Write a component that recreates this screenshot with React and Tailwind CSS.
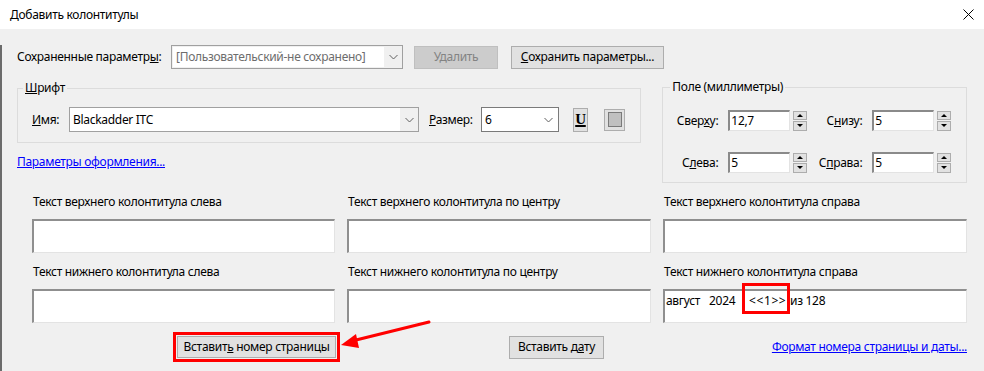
import React from 'react';

// small grey chevron used in the combo boxes
const Chevron = () => (
  <svg width="9" height="6" viewBox="0 0 9 6" className="shrink-0">
    <polyline points="0.5,1 4.5,5 8.5,1" fill="none" stroke="#606060" strokeWidth="1" />
  </svg>
);

const SpinInput = ({ value }) => (
  <div className="flex items-center">
    <div className="w-[62px] h-[21px] bg-white border-t-2 border-l-2 border-r border-b border-t-[#8a8a8a] border-l-[#8a8a8a] border-r-[#e3e3e3] border-b-[#e3e3e3] pl-[1px] flex items-center leading-[16px]">
      {value}
    </div>
    <div className="ml-[3px] w-[14px] h-[20px] flex flex-col gap-[1px]">
      <div className="flex-1 bg-[#e1e1e1] border border-[#adadad] flex items-center justify-center">
        <div className="w-0 h-0 border-l-[3px] border-r-[3px] border-b-[3px] border-l-transparent border-r-transparent border-b-black" />
      </div>
      <div className="flex-1 bg-[#e1e1e1] border border-[#adadad] flex items-center justify-center">
        <div className="w-0 h-0 border-l-[3px] border-r-[3px] border-t-[3px] border-l-transparent border-r-transparent border-t-black" />
      </div>
    </div>
  </div>
);

const TextBox = ({ children }) => (
  <div className="relative h-[34px] bg-white border-t-2 border-l-2 border-r border-b border-t-[#8f8f8f] border-l-[#8f8f8f] border-r-[#e3e3e3] border-b-[#e3e3e3] pl-[1px] pt-[2px] leading-[16px] whitespace-pre">
    {children}
  </div>
);

const App = () => {
  return (
    <div className="relative w-[984px] h-[371px] overflow-hidden bg-[#f0f0f0] text-[12px] leading-[16px] tracking-[-0.3px] text-black font-['Noto_Sans',sans-serif]">
      {/* Title bar */}
      <div className="h-[29px] bg-white flex items-center justify-between pl-[10px] pr-[10px]">
        <span>Добавить колонтитулы</span>
        <svg width="11" height="11" viewBox="0 0 11 11">
          <path d="M0.5 0.5 L10.5 10.5 M10.5 0.5 L0.5 10.5" stroke="#000" strokeWidth="1" />
        </svg>
      </div>

      <div className="h-[342px] border-l-2 border-[#6b6b6b] pl-[15px] pr-[17px]">
        {/* Saved settings row */}
        <div className="mt-[16px] h-[24px] flex items-center">
          <span className="w-[154px]">
            Сохраненные параметр<u>ы</u>:
          </span>
          <div className="w-[232px] h-[24px] border border-[#a0a0a0] bg-[#f0f0f0] flex items-center">
            <div className="w-[211px] h-[20px] ml-[1px] bg-white text-[#6d6d6d] pl-[3px] flex items-center">
              [Пользовательский-не сохранено]
            </div>
            <div className="flex-1 flex justify-center">
              <Chevron />
            </div>
          </div>
          <div className="ml-[11px] w-[84px] h-[23px] bg-[#cccccc] border border-[#bfbfbf] text-[#838383] flex items-center justify-center">
            Удалить
          </div>
          <div className="ml-[13px] w-[153px] h-[23px] bg-[#e1e1e1] border border-[#adadad] flex items-center justify-center">
            <span>
              <u>С</u>охранить параметры...
            </span>
          </div>
        </div>

        {/* Font + margins */}
        <div className="mt-[10px] flex items-start">
          <div className="w-[625px] mt-[1px]">
            <fieldset className="border border-[#dcdcdc] pl-[14px] pb-[10px]">
              <legend className="-ml-[9px] px-[2px] leading-[16px]">
                <u>Ш</u>рифт
              </legend>
              <div className="mt-[11px] h-[25px] flex items-center">
                <span className="w-[37px]">
                  <u>И</u>мя:
                </span>
                <div className="w-[350px] h-[25px] border border-[#a0a0a0] bg-[#f0f0f0] flex items-center">
                  <div className="w-[330px] h-[23px] bg-white pl-[3px] flex items-center">Blackadder ITC</div>
                  <div className="flex-1 flex justify-center">
                    <Chevron />
                  </div>
                </div>
                <span className="ml-[10px] w-[52px]">
                  <u>Р</u>азмер:
                </span>
                <div className="w-[78px] h-[25px] border border-[#7a7a7a] bg-white flex items-center justify-between pl-[3px] pr-[5px]">
                  <span>6</span>
                  <Chevron />
                </div>
                <div className="ml-[14px] w-[15px] h-[24px] bg-[#e1e1e1] border border-[#adadad] flex items-center justify-center">
                  <span className="font-['Liberation_Serif',serif] font-bold text-[15px] leading-[15px] underline decoration-[2px] underline-offset-[1px]">
                    U
                  </span>
                </div>
                <div className="ml-[16px] w-[21px] h-[22px] bg-[#e1e1e1] border border-[#adadad] flex items-center justify-center">
                  <div className="w-[14px] h-[15px] bg-[#c0c0c0] border border-[#7a7a7a]" />
                </div>
              </div>
            </fieldset>
            <a className="block mt-[11px] text-[#0000ff] underline">Параметры оформления...</a>
          </div>

          <fieldset className="ml-[21px] w-[305px] border border-[#dcdcdc] pl-[6px] pt-[15px] pb-[9px]">
            <legend className="ml-[1px] px-[2px] leading-[16px]">Поле (миллиметры)</legend>
            <div className="flex items-center h-[21px]">
              <span className="w-[49px] text-right">
                Свер<u>х</u>у:
              </span>
              <div className="ml-[10px]">
                <SpinInput value="12,7" />
              </div>
              <span className="w-[55px] text-right">
                С<u>н</u>изу:
              </span>
              <div className="ml-[10px]">
                <SpinInput value="5" />
              </div>
            </div>
            <div className="mt-[21px] flex items-center h-[21px]">
              <span className="w-[49px] text-right">
                С<u>л</u>ева:
              </span>
              <div className="ml-[10px]">
                <SpinInput value="5" />
              </div>
              <span className="w-[55px] text-right">
                С<u>п</u>рава:
              </span>
              <div className="ml-[10px]">
                <SpinInput value="5" />
              </div>
            </div>
          </fieldset>
        </div>

        {/* Header / footer text boxes */}
        <div className="mt-[11px] ml-[15px] w-[935px] grid grid-cols-[303px_304px_304px] gap-x-[12px]">
          <div className="pl-[1px] mb-[9px]">Текст верхнего колонтитула слева</div>
          <div className="pl-[1px] mb-[9px]">Текст верхнего колонтитула по центру</div>
          <div className="pl-[1px] mb-[9px]">Текст верхнего колонтитула справа</div>
          <TextBox />
          <TextBox />
          <TextBox />
          <div className="pl-[1px] mt-[11px] mb-[9px]">Текст нижнего колонтитула слева</div>
          <div className="pl-[1px] mt-[11px] mb-[9px]">Текст нижнего колонтитула по центру</div>
          <div className="pl-[1px] mt-[11px] mb-[9px]">Текст нижнего колонтитула справа</div>
          <TextBox />
          <TextBox />
          <TextBox>
            <span className="inline-block w-[43px]">август</span>
            <span className="inline-block w-[40px]">2024</span>
            <span className="inline-block w-[41px] tracking-[0.6px]">&lt;&lt;1&gt;&gt;</span>
            <span>из 128</span>
            {/* annotation box */}
            <div className="absolute left-[77px] top-[-8px] w-[48px] h-[31px] border-[3px] border-[#ff0000]" />
          </TextBox>
        </div>

        {/* Bottom buttons */}
        <div className="mt-[9px] flex items-center">
          <div className="ml-[156px] border-[3px] border-[#ff0000] p-[1px]">
            <div className="w-[159px] h-[22px] bg-[#e1e1e1] border border-[#adadad] flex items-center justify-center">
              <span>
                Встави<span>т</span>
                <u>ь</u> номер страницы
              </span>
            </div>
          </div>
          <div className="ml-[169px] w-[95px] h-[23px] bg-[#e1e1e1] border border-[#adadad] flex items-center justify-center">
            <span>
              Вставить д<u>а</u>ту
            </span>
          </div>
          <a className="ml-auto text-[#0000ff] underline">Формат номера страницы и даты...</a>
        </div>
      </div>

      {/* red annotation arrow */}
      <svg className="absolute left-[330px] top-[310px]" width="110" height="45" viewBox="0 0 110 45">
        <line x1="99" y1="12" x2="26" y2="30" stroke="#ff0000" strokeWidth="3" strokeLinecap="round" />
        <polygon points="11,35 29,38 26,24" fill="#ff0000" />
      </svg>
    </div>
  );
};

export default App;
